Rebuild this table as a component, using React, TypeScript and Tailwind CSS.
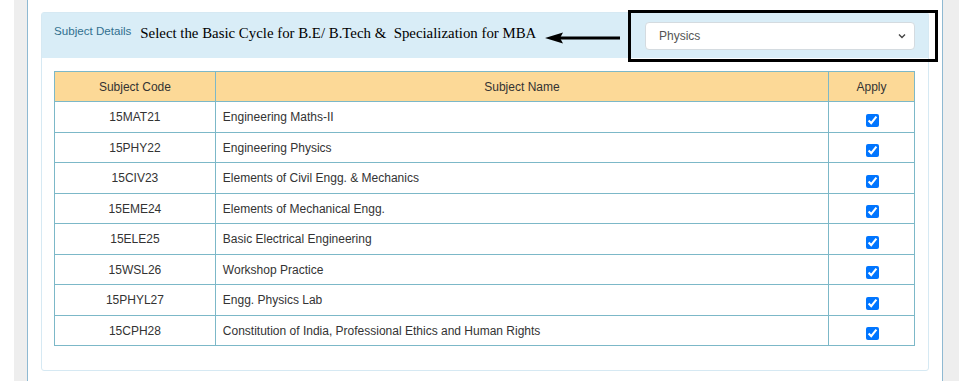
import React from "react";

const rows: [string, string][] = [
  ["15MAT21", "Engineering Maths-II"],
  ["15PHY22", "Engineering Physics"],
  ["15CIV23", "Elements of Civil Engg. & Mechanics"],
  ["15EME24", "Elements of Mechanical Engg."],
  ["15ELE25", "Basic Electrical Engineering"],
  ["15WSL26", "Workshop Practice"],
  ["15PHYL27", "Engg. Physics Lab"],
  ["15CPH28", "Constitution of India, Professional Ethics and Human Rights"],
];

export default function App() {
  return (
    <div
      className="relative w-[959px] h-[381px] bg-white flex overflow-hidden"
      style={{ fontFamily: '"Liberation Sans", Arial, sans-serif' }}
    >
      <div className="w-[14px] shrink-0 bg-white" />
      <div className="w-[13px] shrink-0 bg-[#eeeeee]" />
      <div className="w-[916px] shrink-0 border-x border-[#8fb9d2] bg-white pl-[13px] pt-[12px]">
        <div className="w-[888px] h-[359px] border border-[#d6e9f3] rounded-[3px] bg-white">
          <div className="h-[45px] bg-[#d9edf7] flex items-start pl-[12px] pr-[13px]">
            <div className="flex items-start pt-[11px]">
              <span className="text-[11.6px] text-[#31708f] leading-[14px]">Subject Details</span>
              <span
                className="ml-[9px] text-[14.85px] text-black leading-[18px] whitespace-pre"
                style={{ fontFamily: '"Liberation Serif", "Times New Roman", serif' }}
              >
                {"Select the Basic Cycle for B.E/ B.Tech &  Specialization for MBA"}
              </span>
            </div>
            <div className="ml-auto mt-[9px] w-[270px] h-[28px] bg-white border border-[#d4dbe0] rounded-[4px] flex items-center pl-[13px] pr-[7px]">
              <span className="text-[12px] text-[#555]">Physics</span>
              <svg className="ml-auto" width="10" height="10" viewBox="0 0 10 10">
                <path d="M2 3.5 L5 6.5 L8 3.5" fill="none" stroke="#444" strokeWidth="1.4" />
              </svg>
            </div>
          </div>
          <div className="pl-[12px] pt-[13px]">
            <table className="border-collapse w-[861px] text-[12px] text-[#333]">
              <thead>
                <tr className="h-[30px] bg-[#fcd997]">
                  <th className="w-[161px] border border-[#7cb8c8] font-normal text-center">Subject Code</th>
                  <th className="w-[614px] border border-[#7cb8c8] font-normal text-center">Subject Name</th>
                  <th className="w-[86px] border border-[#7cb8c8] font-normal text-center">Apply</th>
                </tr>
              </thead>
              <tbody>
                {rows.map(([code, name], i) => (
                  <tr key={code} className={i % 2 === 0 ? "h-[31px]" : "h-[30px]"}>
                    <td className="border border-[#7cb8c8] text-center">{code}</td>
                    <td className="border border-[#7cb8c8] pl-[7px]">{name}</td>
                    <td className="border border-[#7cb8c8] text-center">
                      <input
                        type="checkbox"
                        defaultChecked
                        className="w-[13px] h-[13px] m-0 mt-[6px] ml-[1px] align-middle"
                      />
                    </td>
                  </tr>
                ))}
              </tbody>
            </table>
          </div>
        </div>
      </div>
      <div className="flex-1 bg-[#eeeeee]" />

      <svg className="absolute left-[543px] top-[30px]" width="80" height="16" viewBox="0 0 80 16">
        <path d="M2 8 L20 2.5 L17 8 L20 13.5 Z" fill="#000" />
        <rect x="16" y="6.5" width="61" height="3" fill="#000" />
      </svg>
      <div className="absolute left-[628px] top-[10px] w-[310px] h-[52px] border-[3px] border-black" />
    </div>
  );
}
